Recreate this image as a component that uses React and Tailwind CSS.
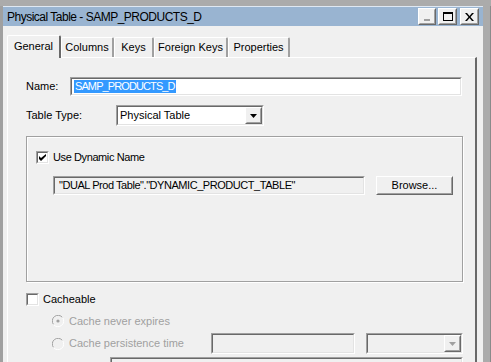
import React from "react";

const Sunken = ({ className = "", children }) => (
  <div className={`border border-t-[#a0a0a0] border-l-[#a0a0a0] border-r-white border-b-white ${className}`}>
    <div className="h-full w-full border border-t-[#696969] border-l-[#696969] border-r-[#e3e3e3] border-b-[#e3e3e3] flex items-center">
      {children}
    </div>
  </div>
);

const Raised = ({ className = "", children }) => (
  <div className={`border border-t-white border-l-white border-r-[#696969] border-b-[#696969] ${className}`}>
    <div className="h-full w-full border border-t-[#f0f0f0] border-l-[#f0f0f0] border-r-[#a0a0a0] border-b-[#a0a0a0] bg-[#f0f0f0] flex items-center justify-center">
      {children}
    </div>
  </div>
);

const Arrow = ({ color = "#000" }) => (
  <svg width="7" height="4" viewBox="0 0 7 4">
    <path d="M0 0h7L3.5 4z" fill={color} />
  </svg>
);

const Checkbox = ({ checked }) => (
  <Sunken className="w-[13px] h-[13px] shrink-0">
    <div className="w-full h-full bg-white flex items-center justify-center">
      {checked && (
        <svg width="7" height="7" viewBox="0 0 7 7">
          <path d="M0 2v3l2 2 5-5V-0L2 4z" fill="#000" />
        </svg>
      )}
    </div>
  </Sunken>
);

const Radio = ({ checked }) => (
  <svg width="12" height="12" viewBox="0 0 12 12" className="shrink-0">
    <path d="M10.5 2.5A5 5 0 0 0 1.5 9.5" stroke="#a0a0a0" fill="none" />
    <path d="M1.5 9.5A5 5 0 0 0 10.5 2.5" stroke="#ffffff" fill="none" />
    <circle cx="6" cy="6" r="4" fill="#f0f0f0" />
    {checked && <circle cx="6" cy="6" r="1.6" fill="#a0a0a0" />}
  </svg>
);

const tabs = ["General", "Columns", "Keys", "Foreign Keys", "Properties"];
const tabWidths = ["w-[54px]", "w-[53px]", "w-[40px]", "w-[74px]", "w-[62px]"];

export default function App() {
  return (
    <div
      className="w-[491px] h-[362px] overflow-hidden bg-[#a0a0a0] text-[11px] text-black flex flex-col"
      style={{ fontFamily: '"Liberation Sans", Arial, sans-serif' }}
    >
      <div className="h-[6px] shrink-0 bg-[#ababab]" />
      <div className="flex flex-1 min-h-0">
        <div className="w-[3px] bg-[#a0a0a0]" />
        <div className="w-[480px] flex flex-col border-t border-[#dfe8f2]">
          {/* title bar */}
          <div className="h-[22px] bg-[#99b4d1] flex items-center pl-[4px] pr-[4px]">
            <span className="text-[12px] flex-1 tracking-[-0.5px] pt-[1px]">Physical Table - SAMP_PRODUCTS_D</span>
            <div className="flex gap-[2px] items-center">
              <Raised className="w-[18px] h-[17px]">
                <div className="w-[6px] h-[2px] bg-[#a0a0a0] mt-[7px]" />
              </Raised>
              <Raised className="w-[19px] h-[17px]">
                <div className="w-[10px] h-[9px] border border-black border-t-2" />
              </Raised>
              <Raised className="w-[19px] h-[17px] ml-[1px]">
                <svg width="9" height="8" viewBox="0 0 9 8">
                  <path d="M0 0h2l2.5 3L7 0h2L5.5 4 9 8H7L4.5 5 2 8H0l3.5-4z" fill="#000" />
                </svg>
              </Raised>
            </div>
          </div>
          {/* body */}
          <div className="flex-1 bg-[#f0f0f0] pl-[4px] pr-[6px] pt-[9px] flex flex-col">
            <div className="flex items-end h-[22px] pl-[2px] relative z-10">
              {tabs.map((t, i) =>
                i === 0 ? (
                  <div
                    key={t}
                    className={`${tabWidths[i]} h-[23px] -mb-[1px] -ml-[2px] border-l border-t border-white border-r-2 border-r-[#696969] rounded-t-[2px] bg-[#f0f0f0] flex items-center justify-center pb-[1px]`}
                  >
                    {t}
                  </div>
                ) : (
                  <div
                    key={t}
                    className={`${tabWidths[i]} h-[20px] border-l border-t border-white border-r-2 border-r-[#a0a0a0] rounded-t-[2px] flex items-center justify-center`}
                  >
                    {t}
                  </div>
                )
              )}
            </div>
            <div className="flex-1 border-l border-t border-white border-r-2 border-r-[#696969] pl-[18px] pt-[19px] flex flex-col">
              {/* Name */}
              <div className="flex items-center h-[19px]">
                <span className="w-[44px]">Name:</span>
                <Sunken className="w-[392px] h-[19px]">
                  <div className="bg-white w-full h-full flex items-center pl-[2px]">
                    <span className="bg-[#3399ff] text-white px-[1px] leading-[13px] tracking-[-0.9px]">SAMP_PRODUCTS_D</span>
                  </div>
                </Sunken>
              </div>
              {/* Table Type */}
              <div className="flex items-center h-[21px] mt-[9px]">
                <span className="w-[90px]">Table Type:</span>
                <Sunken className="w-[148px] h-[21px]">
                  <div className="bg-white w-full h-full flex items-center">
                    <span className="flex-1 pl-[2px]">Physical Table</span>
                    <Raised className="w-[17px] h-full">
                      <Arrow />
                    </Raised>
                  </div>
                </Sunken>
              </div>
              {/* group */}
              <div className="mt-[10px] w-[437px] h-[146px] border border-[#a0a0a0] shadow-[inset_1px_1px_0_#ffffff,1px_1px_0_#ffffff] pl-[9px] pt-[14px] flex flex-col">
                <div className="flex items-center gap-[4px] h-[13px]">
                  <Checkbox checked />
                  <span className="tracking-[-0.4px]">Use Dynamic Name</span>
                </div>
                <div className="flex items-center mt-[12px] pl-[17px]">
                  <Sunken className="w-[312px] h-[19px]">
                    <span className="pl-[4px] tracking-[-0.45px]">"DUAL Prod Table"."DYNAMIC_PRODUCT_TABLE"</span>
                  </Sunken>
                  <Raised className="w-[77px] h-[19px] ml-[11px]">
                    <span>Browse...</span>
                  </Raised>
                </div>
              </div>
              {/* cacheable */}
              <div className="flex items-center gap-[4px] h-[13px] mt-[11px]">
                <Checkbox />
                <span>Cacheable</span>
              </div>
              <div className="flex items-center gap-[5px] mt-[9px] ml-[26px] text-[#a0a0a0] h-[12px]">
                <Radio checked />
                <span>Cache never expires</span>
              </div>
              <div className="flex items-center mt-[6px] ml-[26px] text-[#a0a0a0] h-[21px]">
                <Radio />
                <span className="ml-[5px] w-[142px]">Cache persistence time</span>
                <Sunken className="w-[144px] h-[21px]">
                  <div className="w-full h-full bg-[#f0f0f0]" />
                </Sunken>
                <Sunken className="w-[97px] h-[21px] ml-[11px]">
                  <div className="w-full h-full flex justify-end">
                    <Raised className="w-[17px] h-full">
                      <Arrow color="#a0a0a0" />
                    </Raised>
                  </div>
                </Sunken>
              </div>
              <Sunken className="w-[353px] h-[21px] ml-[84px] mt-[3px]">
                <div className="w-full h-full bg-[#f0f0f0]" />
              </Sunken>
            </div>
          </div>
        </div>
        <div className="w-[8px] bg-[#ababab] border-r border-[#8a8a8a]" />
      </div>
    </div>
  );
}
